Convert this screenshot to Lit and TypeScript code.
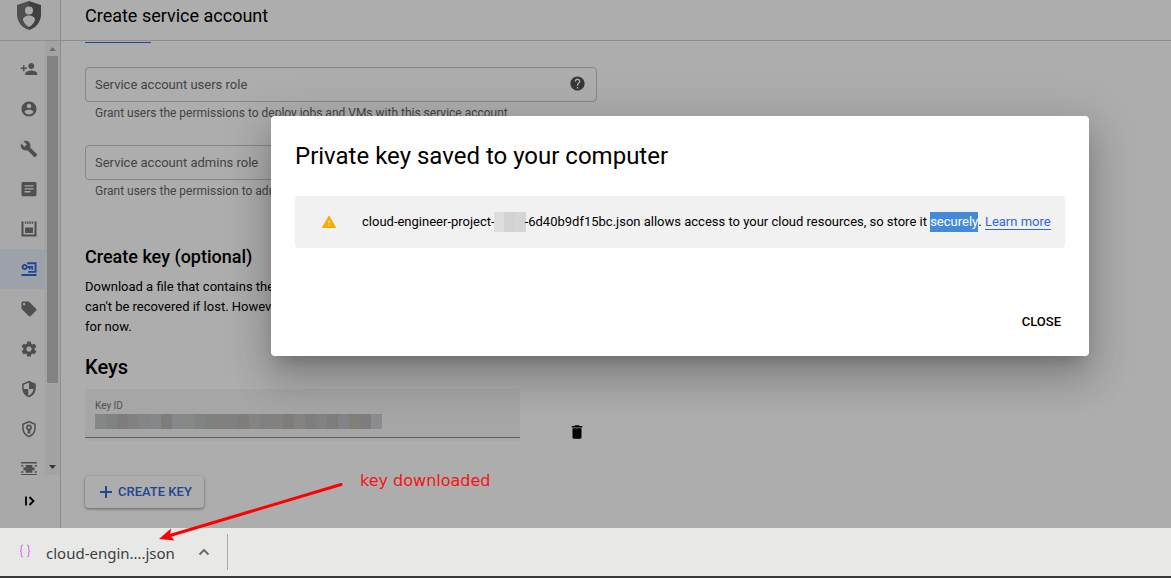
import { LitElement, html, css, svg } from "lit";
import { customElement } from "lit/decorators.js";

const navItems = [
  { label: "IAM", d: "M15 12c2.21 0 4-1.79 4-4s-1.79-4-4-4-4 1.79-4 4 1.79 4 4 4zm-9-2V7H4v3H1v2h3v3h2v-3h3v-2H6zm9 4c-2.67 0-8 1.34-8 4v2h16v-2c0-2.66-5.33-4-8-4z" },
  { label: "Identity", d: "M12 2C6.48 2 2 6.48 2 12s4.48 10 10 10 10-4.48 10-10S17.520 2 12 2zm0 3c1.660 0 3 1.340 3 3s-1.340 3-3 3-3-1.340-3-3 1.340-3 3-3zm0 14.200c-2.500 0-4.710-1.280-6-3.220.03-1.990 4-3.080 6-3.080 1.990 0 5.970 1.090 6 3.080-1.290 1.940-3.500 3.220-6 3.220z" },
  { label: "Policy troubleshooter", d: "M22.700 19l-9.100-9.100c.9-2.300.4-5-1.500-6.900-2-2-5-2.400-7.400-1.300L9 6 6 9 1.600 4.700C.4 7.100.9 10.100 2.900 12.100c1.900 1.900 4.600 2.400 6.900 1.500l9.100 9.100c.4.4 1 .4 1.400 0l2.300-2.300c.5-.4.5-1.100.1-1.400z" },
  { label: "Organization policies", d: "M20 2.500H4c-1.100 0-2 .9-2 2v15c0 1.100.9 2 2 2h16c1.100 0 2-.9 2-2v-15c0-1.100-.9-2-2-2zm-6 14H6v-1.800h8v1.800zm4-4H6v-1.500h12v1.500zm0-4H6V7h12v1.500z" },
  { label: "Quotas", d: "M2 2h2.700v17.300h14.600V2H22v20H2V2zm4.500 0h2v3h-2V2zm3 0h2v3h-2V2zm3 0h2v3h-2V2zm3 0h2v3h-2V2zM6.700 10h10.600v7.300H6.700V10z" },
  { label: "Service accounts", selected: true, d: "M6.300 5.300c1.700 0 3.100 1 3.700 2.600h7.600v5h-2.300v-2.200h-1.300v2.200h-2.200v-2.200H10A4 4 0 1 1 6.300 5.300zm0 2.500a1.500 1.500 0 1 0 0 3 1.500 1.500 0 0 0 0-3zM9.500 3H22v14H11v-2.500h8.500V5.500H9.500V3zM2 18.700h20v2.600H2v-2.600z" },
  { label: "Labels", d: "M21.410 11.580l-9-9C12.050 2.220 11.550 2 11 2H4c-1.100 0-2 .9-2 2v7c0 .55.22 1.050.590 1.420l9 9c.36.36.86.580 1.410.580s1.050-.22 1.410-.590l7-7c.37-.36.590-.86.590-1.410s-.23-1.060-.590-1.420zM5.500 7C4.670 7 4 6.330 4 5.500S4.670 4 5.500 4 7 4.670 7 5.500 6.330 7 5.500 7z" },
  { label: "Settings", d: "M19.430 12.980c.04-.32.07-.64.07-.98s-.03-.66-.07-.98l2.110-1.650c.19-.15.24-.42.12-.64l-2-3.460c-.12-.22-.39-.3-.61-.22l-2.490 1c-.52-.4-1.080-.73-1.690-.98l-.38-2.650C14.460 2.180 14.250 2 14 2h-4c-.25 0-.46.18-.49.42l-.38 2.650c-.61.25-1.170.590-1.690.98l-2.490-1c-.23-.09-.49 0-.61.22l-2 3.460c-.13.22-.07.49.12.64l2.110 1.650c-.04.32-.07.65-.07.98s.03.66.07.98l-2.110 1.650c-.19.15-.24.42-.12.64l2 3.460c.12.22.39.3.61.22l2.490-1c.52.4 1.080.73 1.690.98l.38 2.650c.03.24.24.42.49.42h4c.25 0 .46-.18.49-.42l.38-2.650c.61-.25 1.170-.590 1.690-.98l2.490 1c.23.09.49 0 .61-.22l2-3.460c.12-.22.07-.49-.12-.64l-2.110-1.650zM12 15.500c-1.930 0-3.500-1.570-3.500-3.500s1.570-3.500 3.500-3.500 3.500 1.570 3.500 3.500-1.570 3.500-3.500 3.500z" },
  { label: "Privacy and security", d: "M12 1L3 5v6c0 5.550 3.840 10.740 9 12 5.160-1.260 9-6.450 9-12V5l-9-4zm0 10.990h6c-.53 4.120-3.280 7.790-7 8.940V12H5V6.300l7-3.110v8.800z" },
  { label: "Identity-aware proxy", d: "M12 1L3 5v6c0 5.550 3.840 10.740 9 12 5.160-1.260 9-6.450 9-12V5l-9-4zm0 2.200l7 3.100V11c0 4.520-2.980 8.690-7 9.930C7.980 19.690 5 15.520 5 11V6.300l7-3.100zM12 6a4 4 0 0 0-1.800 7.600V18h3.600v-4.400A4 4 0 0 0 12 6zm0 2.200a1.800 1.800 0 1 1 0 3.600 1.800 1.800 0 0 1 0-3.600z" },
  { label: "Roles", d: "M1.500 2.700h21v2H1.500v-2zm0 16h21v2H1.500v-2zM7.500 6.500h9v3.500h3v3.500h-3V17h-9v-3.500h-3V10h3V6.500zM1.500 6.700h3v2h-3v-2zm18 0h3v2h-3v-2zM1.500 15h3v2h-3v-2zm18 0h3v2h-3v-2z" },
];

const helpPath = "M12 2C6.480 2 2 6.480 2 12s4.480 10 10 10 10-4.480 10-10S17.520 2 12 2zm1 17h-2v-2h2v2zm2.070-7.750l-.9.920C13.450 12.900 13 13.500 13 15h-2v-.5c0-1.100.45-2.100 1.170-2.830l1.240-1.260c.37-.36.590-.86.590-1.410 0-1.100-.9-2-2-2s-2 .9-2 2H8c0-2.210 1.790-4 4-4s4 1.790 4 4c0 .88-.36 1.680-.93 2.250z";

const keyMosaic = ["#c3c6c9", "#bcc1bf", "#bbb9b6", "#c1bfbe", "#c2c5c9", "#c4c8c9", "#bab8b7", "#c5c9cf", "#c9c9c5", "#bfc3c1", "#bcbebd", "#c0bdb9", "#bcbfbf", "#bbb7b3", "#c3c3c1", "#bdbec2", "#c3c0bd", "#bbb8b6", "#c5c1bd", "#bababa", "#bdc2bf", "#b8b8b9", "#c0c3c7", "#c0bbb6", "#b8b9ba", "#cccfd3"];

const icon = (d: string, cls = "icon") =>
  html`<svg class=${cls} viewBox="0 0 24 24" aria-hidden="true">${svg`<path fill="currentColor" fill-rule="evenodd" d=${d} />`}</svg>`;

@customElement("side-nav")
class SideNav extends LitElement {
  static styles = css`
    :host { display: flex; flex-direction: column; min-height: 0; background: #f9f9f9; border-right: 1px solid #d2d2d2; }
    .scroller { display: flex; height: 434px; overflow: hidden; }
    nav { flex: 1; padding-top: 8px; }
    .item { display: flex; align-items: center; height: 40px; padding-left: 20px; color: #757575; }
    .item.selected { background: #e8eefb; color: #3367d6; }
    .icon { width: 18px; height: 18px; }
    .bar { display: flex; flex-direction: column; align-items: center; justify-content: space-between; width: 15px; background: #f1f1f1; }
    .arrow { width: 15px; height: 15px; flex: none; }
    .track { flex: 1; width: 11px; }
    .thumb { height: 327px; background: #c1c1c1; }
    .collapse { display: flex; align-items: center; height: 52px; padding: 0 0 0 20px; border: 0; background: none; color: #000; }
  `;
  render() {
    return html`
      <div class="scroller">
        <nav aria-label="IAM and admin">
          ${navItems.map((n) => html`<a class="item ${n.selected ? "selected" : ""}" href="#" aria-label=${n.label}>${icon(n.d)}</a>`)}
        </nav>
        <div class="bar" aria-hidden="true">
          <svg class="arrow" viewBox="0 0 15 15"><path fill="#a3a3a3" d="M4 10l3.500-4 3.500 4z" /></svg>
          <div class="track"><div class="thumb"></div></div>
          <svg class="arrow" viewBox="0 0 15 15"><path fill="#505050" d="M4 5l3.500 4 3.500-4z" /></svg>
        </div>
      </div>
      <button class="collapse" aria-label="Expand navigation">
        <svg class="icon" viewBox="0 0 18 18"><path d="M6 4.500v9M9.500 5L13.500 9l-4 4" fill="none" stroke="currentColor" stroke-width="1.800" /></svg>
      </button>`;
  }
}

@customElement("account-form")
class AccountForm extends LitElement {
  static styles = css`
    :host { display: block; min-width: 0; padding: 1px 24px 0; overflow: hidden; }
    .tab { width: 66px; height: 1px; background: #3367d6; }
    .column { max-width: 512px; padding-top: 24px; }
    .field { display: flex; align-items: center; box-sizing: border-box; height: 35px; padding: 0 10px 0 9px; border: 1px solid #c6c6c6; border-radius: 4px; color: #505050; }
    .field input { flex: 1; min-width: 0; padding: 0; border: 0; outline: 0; background: none; font: 13px/20px Roboto, sans-serif; }
    .field input::placeholder { color: #656565; opacity: 1; }
    .icon { width: 17px; height: 17px; flex: none; padding-bottom: 2px; }
    .hint { height: 43px; padding-left: 10px; font-size: 12px; line-height: 22px; color: #656565; }
    h2 { margin: 22px 0 8px; font-size: 18px; line-height: 24px; font-weight: 500; }
    p { margin: 0; line-height: 20px; }
    h3 { margin: 16px 0 8px; font-size: 20px; line-height: 28px; font-weight: 500; }
    .key-row { display: flex; align-items: flex-end; gap: 48px; }
    .key-box { width: 435px; border-bottom: 3px solid #fafafa; }
    .key { display: grid; grid-template-rows: 16px 16px; box-sizing: border-box; height: 49px; padding: 8px 10px 0; background: #f5f5f5; border-bottom: 1px solid #8e8e8e; border-radius: 4px 4px 0 0; }
    .key label { font-size: 10px; line-height: 18px; color: #757575; }
    .value { display: grid; grid-template-columns: 287px; align-items: center; }
    .value > * { grid-area: 1 / 1; }
    .value input { min-width: 0; height: 15px; padding: 0; border: 0; background: none; }
    .mosaic { display: flex; height: 15px; }
    .cell { flex: 1; }
    .icon-button { display: flex; padding: 0; border: 0; background: none; color: #000; }
    .trash { width: 18px; height: 18px; }
    .create { display: inline-flex; align-items: center; gap: 4px; height: 32px; margin-top: 35px; padding: 0 12px 0 13px; border: 0; border-radius: 4px; background: #fff; box-shadow: 0 1px 3px rgba(0, 0, 0, 0.45); color: #3367d6; font: 500 13px/20px Roboto, sans-serif; }
    .plus { width: 16px; height: 16px; }
  `;
  field(label: string, hint: string) {
    return html`
      <div class="field">
        <input type="text" placeholder=${label} aria-label=${label} />
        ${icon(helpPath)}
      </div>
      <div class="hint">${hint}</div>`;
  }
  render() {
    return html`
      <div class="tab"></div>
      <div class="column">
        ${this.field("Service account users role", "Grant users the permissions to deploy jobs and VMs with this service account")}
        ${this.field("Service account admins role", "Grant users the permission to administer this service account")}
        <h2>Create key (optional)</h2>
        <p>Download a file that contains the private key. Store the file securely because this key can't be recovered if lost. However, if you are unsure why you need a key, skip this step for now.</p>
        <h3>Keys</h3>
        <div class="key-row">
          <div class="key-box">
            <div class="key">
              <label for="key-id">Key ID</label>
              <div class="value">
                <input id="key-id" type="text" readonly />
                <div class="mosaic">${keyMosaic.map((c) => html`<span class="cell" style="background:${c}"></span>`)}</div>
              </div>
            </div>
          </div>
          <button class="icon-button" aria-label="Delete key">${icon("M6 19c0 1.100.9 2 2 2h8c1.100 0 2-.9 2-2V7H6v12zM19 4h-3.500l-1-1h-5l-1 1H5v2h14V4z", "trash")}</button>
        </div>
        <button class="create">
          <svg class="plus" viewBox="0 0 16 16" aria-hidden="true"><path d="M8 2v12M2 8h12" stroke="currentColor" stroke-width="2" /></svg>
          CREATE KEY
        </button>
      </div>`;
  }
}

@customElement("key-dialog")
class KeyDialog extends LitElement {
  static styles = css`
    :host { display: block; flex: 1; min-width: 0; box-sizing: border-box; padding: 24px 24px 16px; background: #fff; border-radius: 4px; box-shadow: 0 11px 15px -7px rgba(0, 0, 0, 0.2), 0 24px 38px 3px rgba(0, 0, 0, 0.14), 0 9px 46px 8px rgba(0, 0, 0, 0.12); }
    h1 { margin: 0 0 24px; font-size: 24px; line-height: 32px; font-weight: 400; }
    .callout { display: flex; align-items: center; gap: 25px; padding: 16px 8px 16px 26px; background: #f1f1f1; border-radius: 4px; line-height: 20px; }
    .warning { width: 16px; height: 16px; flex: none; color: #f9ab00; }
    .redacted { display: inline-flex; width: 32px; height: 20px; margin: 0 -1px; vertical-align: top; }
    .cell { flex: 1; }
    .picked { display: inline-block; background: #448ad8; color: #fff; }
    a { color: #3367d6; text-decoration: none; border-bottom: 1px solid #3367d6; }
    .actions { display: flex; justify-content: flex-end; padding-top: 56px; }
    .close { height: 36px; padding: 0 4px; border: 0; background: none; color: #000; font: 500 13px/20px Roboto, sans-serif; }
  `;
  render() {
    return html`
      <h1>Private key saved to your computer</h1>
      <div class="callout">
        ${icon("M1 21h22L12 2 1 21zm12-3h-2v-2h2v2zm0-4h-2v-4h2v4z", "warning")}
        <div>cloud-engineer-project-<span class="redacted">${["#dedede", "#d2d2d2", "#d5d5d5"].map((c) => html`<span class="cell" style="background:${c}"></span>`)}</span>-6d40b9df15bc.json allows access to your cloud resources, so store it <span class="picked">securely</span>. <a href="#">Learn more</a></div>
      </div>
      <div class="actions"><button class="close">CLOSE</button></div>`;
  }
}

@customElement("download-shelf")
class DownloadShelf extends LitElement {
  static styles = css`
    :host { display: flex; align-items: center; box-sizing: border-box; height: 50px; padding-left: 18px; background: #e8e8e6; border-bottom: 2px solid #3a393a; }
    .file { display: flex; align-items: center; gap: 14px; padding: 2px 0 0; border: 0; background: none; color: #3b4043; font: 15px/20px "Noto Sans", sans-serif; }
    .braces { width: 14px; height: 14px; padding-bottom: 4px; }
    .menu { display: flex; align-items: center; justify-content: center; width: 48px; height: 36px; margin-left: auto; padding: 0; border: 0; border-right: 1px solid #a9a9a8; background: none; color: #666; }
    .entry { display: flex; align-items: center; width: 210px; }
    .caret { width: 12px; height: 12px; }
  `;
  render() {
    return html`
      <div class="entry">
        <button class="file">
          <svg class="braces" viewBox="0 0 14 14" aria-hidden="true"><path d="M5 1C3 1 3.300 3 3.300 4.500S3 7 2 7C3 7 3.300 8 3.300 9.500S3 13 5 13M9 1c2 0 1.700 2 1.700 3.500S11 7 12 7c-1 0-1.300 1-1.300 2.500S11 13 9 13" fill="none" stroke="#d57be0" stroke-width="1.200" /></svg>
          cloud-engin….json
        </button>
        <button class="menu" aria-label="Download options">
          <svg class="caret" viewBox="0 0 12 12"><path d="M1.500 8.500L6 4l4.500 4.500" fill="none" stroke="currentColor" stroke-width="1.800" /></svg>
        </button>
      </div>`;
  }
}

@customElement("app-root")
class AppRoot extends LitElement {
  static styles = css`
    :host { display: flex; flex-direction: column; position: relative; height: 100vh; overflow: hidden; font: 13px/20px Roboto, sans-serif; color: #000; background: #fff; }
    .console { position: relative; flex: 1; min-height: 0; display: grid; grid-template: 41px minmax(0, 1fr) / 61px minmax(0, 1fr); overflow: hidden; }
    .logo { display: flex; box-sizing: border-box; padding: 1px 0 0 17px; background: #f9f9f9; border-right: 1px solid #d2d2d2; border-bottom: 1px solid #d2d2d2; }
    .shield { width: 24px; height: 29px; }
    header { display: flex; align-items: center; box-sizing: border-box; padding: 0 24px 8px; border-bottom: 1px solid #d2d2d2; }
    .title { margin: 0; font-size: 18px; line-height: 24px; font-weight: 400; }
    .scrim { position: absolute; inset: 0; display: flex; align-items: flex-start; padding: 116px 82px 0 271px; background: rgba(0, 0, 0, 0.32); }
    .arrow { position: absolute; left: 156px; top: 480px; width: 190px; height: 64px; }
    .note { position: absolute; left: 360px; top: 471px; font: 16px/20px "DejaVu Sans", sans-serif; color: #f51414; }
  `;
  render() {
    return html`
      <div class="console">
        <div class="logo">
          <svg class="shield" viewBox="0 0 24 29" aria-hidden="true">
            <path fill="#757575" d="M12 0L0 4v9c0 8 5 14 12 16z" />
            <path fill="#5f5f5f" d="M12 0l12 4v9c0 8-5 14-12 16z" />
            <circle cx="12" cy="9.500" r="4" fill="#f9f9f9" />
            <path fill="#f9f9f9" d="M6 19c0-3 3-4.500 6-4.500s6 1.500 6 4.500c-1 3-3 5.500-6 7-3-1.500-5-4-6-7z" />
          </svg>
        </div>
        <header><h1 class="title">Create service account</h1></header>
        <side-nav></side-nav>
        <account-form></account-form>
        <div class="scrim"><key-dialog role="dialog" aria-label="Private key saved to your computer"></key-dialog></div>
      </div>
      <download-shelf></download-shelf>
      <svg class="arrow" viewBox="0 0 190 64" aria-hidden="true">
        <path d="M185 4.500L14 55.500" stroke="#f00" stroke-width="3" stroke-linecap="round" />
        <path d="M3 59l12-10.500-1 7 4.500 5z" fill="#f00" />
      </svg>
      <span class="note">key downloaded</span>`;
  }
}
